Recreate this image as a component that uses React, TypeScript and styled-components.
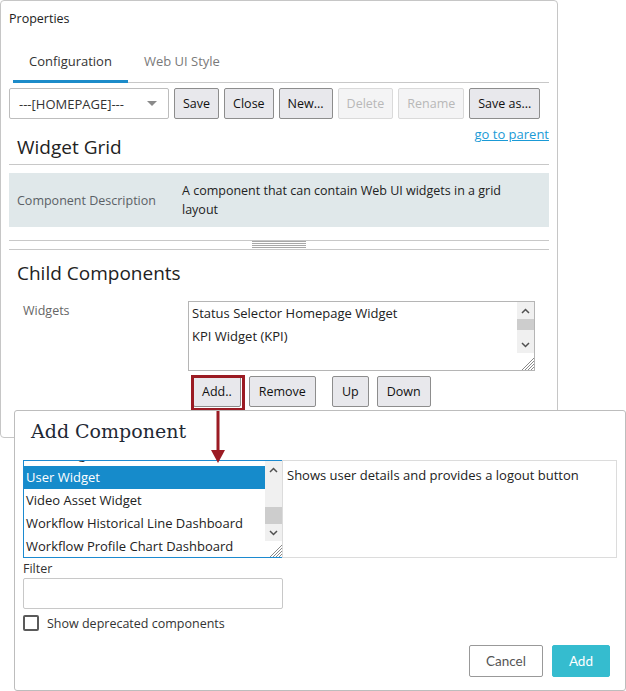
import React from 'react';
import styled, { createGlobalStyle } from 'styled-components';

const GlobalStyle = createGlobalStyle`
  body {
    margin: 0;
    background: #fff;
    font-family: 'Open Sans', 'Noto Sans', sans-serif;
    font-size: 12.5px;
    color: #222;
  }
`;

const Page = styled.div`
  position: relative;
  width: 626px;
  height: 691px;
`;

/* ---------- properties panel ---------- */

const PropertiesPanel = styled.section`
  box-sizing: border-box;
  width: 558px;
  height: 438px;
  border: 1px solid #c6c6c6;
  border-radius: 4px;
  padding: 0 8px;
`;

const PanelTitle = styled.div`
  padding-top: 9px;
  line-height: 18px;
  color: #222;
`;

const TabBar = styled.div`
  display: flex;
  margin: 16px 0 0 4px;
  border-bottom: 1px solid #c8c8c8;
`;

const Tab = styled.div<{ $active?: boolean }>`
  height: 36px;
  line-height: 34px;
  padding: 0 16px;
  font-size: 13px;
  margin-bottom: -1px;
  color: ${(p) => (p.$active ? '#333' : '#7a7a7a')};
  border-bottom: 3px solid ${(p) => (p.$active ? '#1c8bc9' : 'transparent')};
`;

const Toolbar = styled.div`
  display: flex;
  gap: 5px;
  margin-top: 5px;
`;

const SelectBox = styled.div`
  box-sizing: border-box;
  flex: none;
  width: 160px;
  height: 31px;
  display: flex;
  align-items: center;
  justify-content: space-between;
  padding: 0 11px 0 9px;
  border: 1px solid #bdbdbd;
  border-radius: 2px;
  font-size: 13px;
  color: #333;
`;

const Caret = styled.span`
  width: 0;
  height: 0;
  border-left: 5px solid transparent;
  border-right: 5px solid transparent;
  border-top: 5px solid #8a8a8a;
`;

const Button = styled.button<{ $disabled?: boolean; $gapLeft?: number; $pad?: number }>`
  box-sizing: border-box;
  flex: none;
  height: 31px;
  padding: 0 ${(p) => p.$pad ?? 8}px;
  white-space: nowrap;
  font-family: inherit;
  font-size: 12.5px;
  border-radius: 2px;
  border: 1px solid ${(p) => (p.$disabled ? '#dadada' : '#8d8d8d')};
  background: ${(p) => (p.$disabled ? '#f4f4f5' : '#e8e8ec')};
  color: ${(p) => (p.$disabled ? '#b8b8b8' : '#111')};
  margin-left: ${(p) => p.$gapLeft ?? 0}px;
`;

const LinkRow = styled.div`
  margin-top: 7px;
  line-height: 16px;
  text-align: right;
`;

const ParentLink = styled.a`
  color: #1a9ad6;
  text-decoration: underline;
  font-size: 13px;
`;

const SectionTitle = styled.h2<{ $ruled?: boolean }>`
  margin: 0;
  font-size: 19px;
  font-weight: 400;
  line-height: 26px;
  color: #222;
  padding: 0 8px ${(p) => (p.$ruled ? '4px' : '0')};
  border-bottom: ${(p) => (p.$ruled ? '1px solid #c8c8c8' : 'none')};
`;

const DescriptionGrid = styled.div`
  margin-top: 8px;
  background: #e0e8ea;
  display: grid;
  grid-template-columns: 165px 1fr;
  padding: 8px 24px 8px 8px;
  line-height: 19px;
`;

const DescLabel = styled.div`
  align-self: center;
  color: #5b6166;
`;

const Splitter = styled.div`
  margin-top: 13px;
  height: 8px;
  border-top: 1px solid #c8c8c8;
  border-bottom: 1px solid #c8c8c8;
  display: flex;
  justify-content: center;
`;

const Grip = styled.div`
  width: 54px;
  height: 7px;
  background: repeating-linear-gradient(#a8a8a8 0 1px, transparent 1px 2px);
`;

const ChildRow = styled.div<{ $top: number }>`
  display: grid;
  grid-template-columns: 179px 347px;
  margin-top: ${(p) => p.$top}px;
`;

const FieldLabel = styled.div`
  padding: 1px 0 0 14px;
  line-height: 18px;
  color: #666;
`;

const ListBox = styled.div<{ $height: number; $focused?: boolean }>`
  box-sizing: border-box;
  height: ${(p) => p.$height}px;
  display: flex;
  overflow: hidden;
  background: #fff;
  border: 1px solid ${(p) => (p.$focused ? '#1c8ad0' : '#b5b5b5')};
`;

const ListItems = styled.div<{ $offset?: number }>`
  flex: 1;
  overflow: hidden;
  & > div:first-child {
    margin-top: ${(p) => p.$offset ?? 0}px;
  }
`;

const ListItem = styled.div<{ $selected?: boolean; $pad: number }>`
  height: 23px;
  line-height: 23px;
  padding-left: ${(p) => p.$pad}px;
  white-space: nowrap;
  font-size: 13px;
  background: ${(p) => (p.$selected ? '#168bcb' : 'transparent')};
  color: ${(p) => (p.$selected ? '#fff' : '#222')};
`;

const ScrollColumn = styled.div`
  width: 17px;
  flex: none;
  display: flex;
  flex-direction: column;
`;

const ScrollArrow = styled.div`
  height: 17px;
  flex: none;
  background: #f0f0f0;
  display: flex;
  align-items: center;
  justify-content: center;
`;

const ScrollTrack = styled.div`
  flex: 1;
  background: #f0f0f0;
`;

const ScrollThumb = styled.div<{ $top: number; $size: number }>`
  margin-top: ${(p) => p.$top}px;
  height: ${(p) => p.$size}px;
  background: #cdcdcd;
`;

const ScrollCorner = styled.div<{ $size: number }>`
  height: ${(p) => p.$size}px;
  flex: none;
  display: flex;
  align-items: flex-end;
  justify-content: flex-end;
`;

const ButtonRow = styled.div`
  grid-column: 2;
  display: flex;
  margin-top: 5px;
  padding-left: 5px;
`;

const Highlighted = styled.div`
  position: relative;
`;

const HighlightBox = styled.span`
  position: absolute;
  top: -1px;
  left: -2px;
  right: -4px;
  bottom: -4px;
  border: 3px solid #9b1b23;
  pointer-events: none;
`;

const ArrowSvg = styled.svg`
  position: absolute;
  top: 35px;
  left: 18px;
  z-index: 20;
`;

/* ---------- add component dialog ---------- */

const Dialog = styled.div`
  position: absolute;
  left: 14px;
  top: 410px;
  z-index: 10;
  box-sizing: border-box;
  width: 612px;
  height: 281px;
  background: #fff;
  border: 1px solid #bdbdbd;
  border-radius: 3px;
  padding: 7px 8px 13px;
  display: flex;
  flex-direction: column;
`;

const DialogTitle = styled.h1`
  margin: 0 0 0 8px;
  font-family: 'DejaVu Serif', 'Liberation Serif', serif;
  font-size: 19px;
  font-weight: 400;
  line-height: 26px;
  color: #1f2935;
`;

const Chooser = styled.div`
  margin-top: 16px;
  display: grid;
  grid-template-columns: 260px 1fr;
`;

const DescBox = styled.div`
  box-sizing: border-box;
  height: 98px;
  border: 1px solid #dcdcdc;
  margin-left: -1px;
  padding: 5px 4px;
  line-height: 19px;
  font-size: 13px;
  color: #222;
`;

const SmallLabel = styled.div`
  margin-top: 3px;
  line-height: 16px;
  color: #333;
`;

const TextInput = styled.div`
  box-sizing: border-box;
  width: 260px;
  height: 31px;
  margin-top: 1px;
  border: 1px solid #c8c8c8;
  border-radius: 2px;
`;

const CheckRow = styled.label`
  margin-top: 5px;
  display: flex;
  align-items: center;
  gap: 8px;
  height: 18px;
  color: #333;
`;

const CheckBox = styled.span`
  box-sizing: border-box;
  width: 16px;
  height: 16px;
  border: 2px solid #5a5a5a;
  border-radius: 2px;
`;

const Footer = styled.div`
  margin-top: auto;
  display: flex;
  justify-content: flex-end;
  gap: 9px;
  padding-right: 7px;
`;

const FooterButton = styled.button<{ $primary?: boolean }>`
  box-sizing: border-box;
  height: 32px;
  padding: 0 16px;
  font-family: Lato, 'Open Sans', sans-serif;
  font-size: 13.5px;
  border-radius: 2px;
  border: 1px solid ${(p) => (p.$primary ? '#35bccf' : '#999')};
  background: ${(p) => (p.$primary ? '#35bccf' : '#fff')};
  color: ${(p) => (p.$primary ? '#fff' : '#555')};
`;

/* ---------- drawings ---------- */

const Chevron: React.FC<{ down?: boolean }> = ({ down }) => (
  <svg width="9" height="6" viewBox="0 0 9 6">
    <polyline
      points={down ? '1,1 4.5,4.5 8,1' : '1,5 4.5,1.5 8,5'}
      fill="none"
      stroke="#505050"
      strokeWidth="1.5"
    />
  </svg>
);

const ResizeGrip: React.FC = () => (
  <svg width="14" height="14" viewBox="0 0 14 14">
    {[3, 6, 9, 12].map((k) => (
      <line key={k} x1={14} y1={14 - k} x2={14 - k} y2={14} stroke="#8a8a8a" strokeWidth="1" />
    ))}
  </svg>
);

const Scrollbar: React.FC<{ thumbTop: number; thumbSize: number; corner: number }> = ({
  thumbTop,
  thumbSize,
  corner,
}) => (
  <ScrollColumn>
    <ScrollArrow>
      <Chevron />
    </ScrollArrow>
    <ScrollTrack>
      <ScrollThumb $top={thumbTop} $size={thumbSize} />
    </ScrollTrack>
    <ScrollArrow>
      <Chevron down />
    </ScrollArrow>
    <ScrollCorner $size={corner}>
      <ResizeGrip />
    </ScrollCorner>
  </ScrollColumn>
);

const widgets = ['Status Selector Homepage Widget', 'KPI Widget (KPI)'];

// list is scrolled: the first entry only shows its lower edge
const components = [
  'Text Widget',
  'User Widget',
  'Video Asset Widget',
  'Workflow Historical Line Dashboard',
  'Workflow Profile Chart Dashboard',
];

export default function App() {
  return (
    <Page>
      <GlobalStyle />
      <PropertiesPanel>
        <PanelTitle>Properties</PanelTitle>
        <TabBar>
          <Tab $active>Configuration</Tab>
          <Tab>Web UI Style</Tab>
        </TabBar>

        <Toolbar>
          <SelectBox>
            ---[HOMEPAGE]---
            <Caret />
          </SelectBox>
          <Button>Save</Button>
          <Button>Close</Button>
          <Button>New...</Button>
          <Button $disabled>Delete</Button>
          <Button $disabled>Rename</Button>
          <Button>Save as...</Button>
        </Toolbar>

        <LinkRow>
          <ParentLink>go to parent</ParentLink>
        </LinkRow>
        <SectionTitle $ruled style={{ marginTop: -9 }}>
          Widget Grid
        </SectionTitle>

        <DescriptionGrid>
          <DescLabel>Component Description</DescLabel>
          <div>A component that can contain Web UI widgets in a grid layout</div>
        </DescriptionGrid>

        <Splitter>
          <Grip />
        </Splitter>

        <SectionTitle style={{ marginTop: 10 }}>Child Components</SectionTitle>

        <ChildRow $top={15}>
          <FieldLabel>Widgets</FieldLabel>
          <ListBox $height={70}>
            <ListItems>
              {widgets.map((w) => (
                <ListItem key={w} $pad={3}>
                  {w}
                </ListItem>
              ))}
            </ListItems>
            <Scrollbar thumbTop={0} thumbSize={11} corner={17} />
          </ListBox>
          <ButtonRow>
            <Highlighted>
              <Button>Add..</Button>
              <HighlightBox />
              <ArrowSvg width="14" height="52" viewBox="0 0 14 52">
                <line x1="7" y1="0" x2="7" y2="40" stroke="#9b1b23" strokeWidth="3" />
                <polygon points="0,39 14,39 7,52" fill="#9b1b23" />
              </ArrowSvg>
            </Highlighted>
            <Button $gapLeft={8} $pad={9}>
              Remove
            </Button>
            <Button $gapLeft={16} $pad={9}>
              Up
            </Button>
            <Button $gapLeft={8} $pad={9}>
              Down
            </Button>
          </ButtonRow>
        </ChildRow>
      </PropertiesPanel>

      <Dialog>
        <DialogTitle>Add Component</DialogTitle>
        <Chooser>
          <ListBox $height={98} $focused>
            <ListItems $offset={-18}>
              {components.map((c) => (
                <ListItem key={c} $pad={2} $selected={c === 'User Widget'}>
                  {c}
                </ListItem>
              ))}
            </ListItems>
            <Scrollbar thumbTop={29} thumbSize={17} corner={16} />
          </ListBox>
          <DescBox>Shows user details and provides a logout button</DescBox>
        </Chooser>
        <SmallLabel>Filter</SmallLabel>
        <TextInput />
        <CheckRow>
          <CheckBox />
          Show deprecated components
        </CheckRow>
        <Footer>
          <FooterButton>Cancel</FooterButton>
          <FooterButton $primary>Add</FooterButton>
        </Footer>
      </Dialog>
    </Page>
  );
}
